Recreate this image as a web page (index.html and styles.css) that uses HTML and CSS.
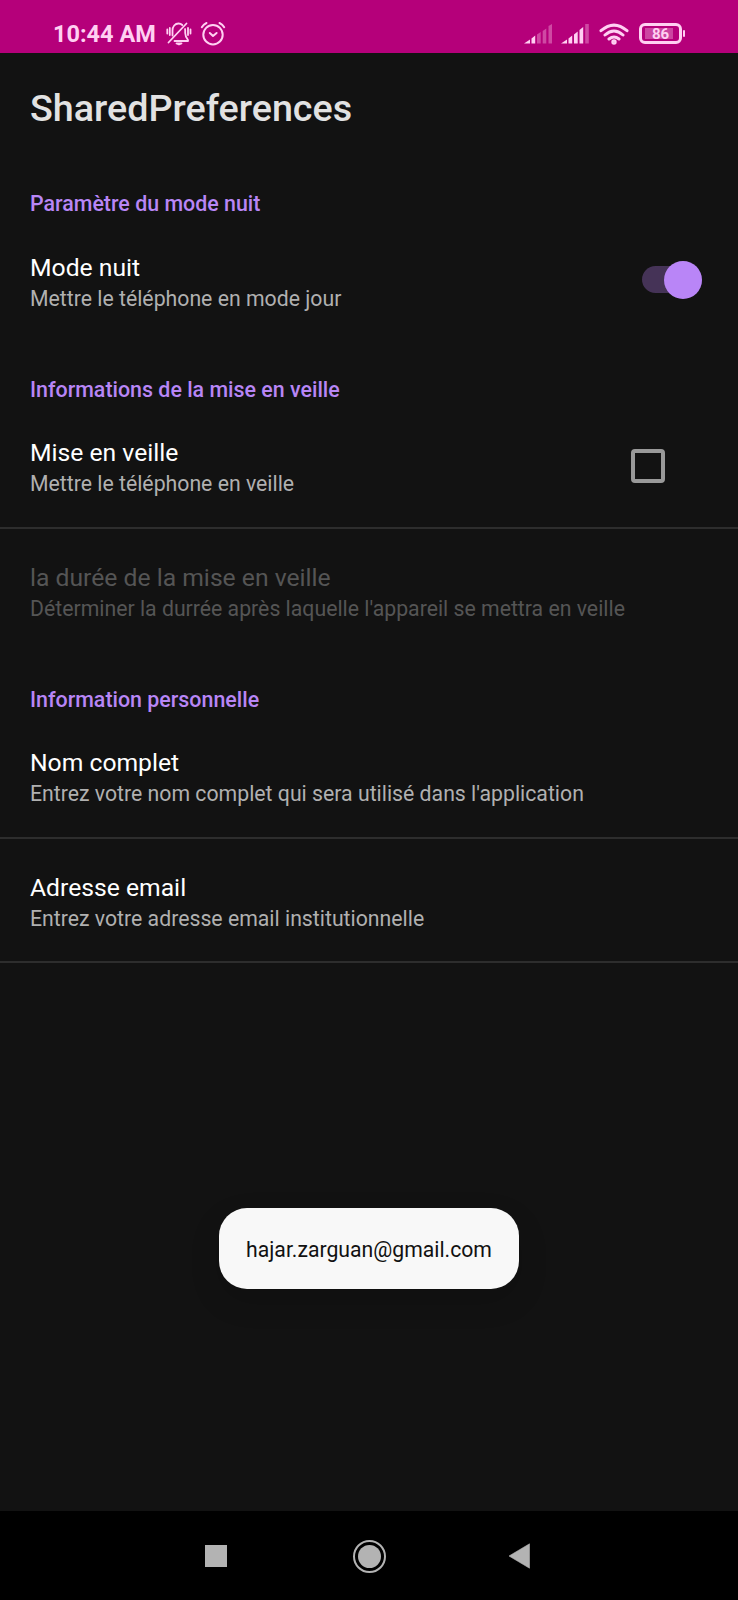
FILE: index.html
```html
<!DOCTYPE html>
<html lang="fr">
<head>
<meta charset="utf-8">
<title>SharedPreferences</title>
<link rel="stylesheet" href="styles.css">
</head>
<body>
<div class="screen">
  <header class="status">
    <span class="clock">10:44 AM</span>
    <svg class="st-bell" width="26" height="26" viewBox="0 0 26 26" fill="none" stroke="currentColor" stroke-width="1.8" stroke-linecap="round" stroke-linejoin="round">
      <path d="M6.500 14.500V9.500C6.500 5.500 9 2.500 12.500 2.500C14 2.500 15.300 3 16.300 4M19 8C19.300 9 19.200 10 19.200 12C19.200 14.500 20 16.500 22 19V20H8.500M10.500 22.500H15.500L13 23.500ZM2.500 21.500L20.500 2.500M1.300 8.500V12.500M3.800 7V14M22 7V14M24.500 8.500V12.500"/>
    </svg>
    <svg class="st-alarm" width="26" height="26" viewBox="0 0 26 26" fill="none" stroke="currentColor" stroke-width="2" stroke-linecap="round" stroke-linejoin="round">
      <circle cx="13" cy="13.700" r="9.700"/><path d="M9.800 12L13 15L16.600 12M1.800 6.200Q3.500 3.400 6.500 2M24.200 6.200Q22.500 3.400 19.500 2"/>
    </svg>
    <span class="spacer"></span>
    <svg class="st-sig1" width="30" height="22" viewBox="0 0 30 22" fill="currentColor">
      <path d="M0 20.500L6 16.500V20.500ZM7.500 15.500L11.200 12.500V20.500H7.500Z"/>
      <path opacity=".35" d="M13 11.500L16.700 9V20.500H13ZM18.700 8L22.300 5.500V20.500H18.700ZM24.500 3L28 1V20.500H24.500Z"/>
    </svg>
    <svg class="st-sig2" width="30" height="22" viewBox="0 0 30 22" fill="currentColor">
      <path d="M0 20.500L6 16.500V20.500ZM7.500 15.500L11.200 12.500V20.500H7.500ZM13 11.500L16.700 8.500V20.500H13ZM18.500 7L22.200 4V20.500H18.500Z"/>
      <path opacity=".35" d="M24.200 1H27.800V20.500H24.200Z"/>
    </svg>
    <svg class="st-wifi" width="30" height="22" viewBox="0 0 30 22" fill="none" stroke="currentColor" stroke-width="3" stroke-linecap="round">
      <path d="M2 7.700Q15 -3.500 28 7.700M6 12Q15 4 24 12M10 16Q15 12 20 16"/><circle cx="15" cy="19" r="1.200"/>
    </svg>
    <span class="battery"><span class="cell">86</span><span class="tip"></span></span>
  </header>

  <h1 class="title">SharedPreferences</h1>

  <main class="prefs">
    <h2 class="cat">Paramètre du mode nuit</h2>
    <div class="row">
      <div class="text"><div class="name">Mode nuit</div><div class="sum">Mettre le téléphone en mode jour</div></div>
      <span class="switch"><span class="thumb"></span></span>
    </div>
    <h2 class="cat">Informations de la mise en veille</h2>
    <div class="row line first">
      <div class="text"><div class="name">Mise en veille</div><div class="sum">Mettre le téléphone en veille</div></div>
      <span class="check"></span>
    </div>
    <div class="row off">
      <div class="text"><div class="name">la durée de la mise en veille</div><div class="sum">Déterminer la durrée après laquelle l'appareil se mettra en veille</div></div>
    </div>
    <h2 class="cat">Information personnelle</h2>
    <div class="row line first">
      <div class="text"><div class="name">Nom complet</div><div class="sum">Entrez votre nom complet qui sera utilisé dans l'application</div></div>
    </div>
    <div class="row line">
      <div class="text"><div class="name">Adresse email</div><div class="sum">Entrez votre adresse email institutionnelle</div></div>
    </div>
  </main>

  <div class="toast">hajar.zarguan@gmail.com</div>

  <nav class="nav">
    <span class="recent"></span>
    <span class="home"></span>
    <svg class="back" width="22" height="26" viewBox="0 0 22 26"><path d="M1 13L21.500 .8V25.200Z" fill="#b3b3b3" stroke="#b3b3b3" stroke-width=".6" stroke-linejoin="round"/></svg>
  </nav>
</div>
</body>
</html>
```

FILE: styles.css
```css
* { box-sizing: border-box; }
body { margin: 0; background: #121212; font-family: Roboto, sans-serif; }
.screen { position: relative; width: 738px; height: 1600px; display: flex; flex-direction: column; background: #121212; overflow: hidden; }

.status { height: 53px; flex: none; display: flex; align-items: flex-start; padding: 21px 53px 0 53px; background: #b5007a; color: #ffd0f2; }
.clock { width: 104px; font-size: 23.5px; line-height: 26px; font-weight: 700; white-space: nowrap; }
.st-bell { margin-left: 9px; }
.st-alarm { margin-left: 8px; }
.spacer { flex: 1; }
.st-sig1 { margin: 2px 7px 0 0; }
.st-sig2 { margin: 2px 8px 0 0; }
.st-wifi { margin: 2px 10px 0 0; }
.battery { display: flex; align-items: center; gap: 1px; margin-top: 2px; }
.cell { width: 43px; height: 21px; border: 3px solid #ffd0f2; border-radius: 6px; font-size: 15px; font-weight: 700; line-height: 16px; text-align: center; background: linear-gradient(#cc45a1, #cc45a1) 2.5px 2px / 28px 11px no-repeat; }
.tip { width: 2px; height: 7px; background: #ffd0f2; border-radius: 1px; }

.title { margin: 0; height: 104px; flex: none; padding: 32px 30px 0; color: #e2e2e2; font-size: 37.7px; font-weight: 500; line-height: 46px; }
.prefs { flex: none; }
.cat { margin: 0; height: 62px; padding: 32px 30px 0; color: #b886f6; font-size: 21.4px; font-weight: 500; line-height: 29px; }
.row { height: 124px; display: flex; justify-content: space-between; padding: 33px 30px 0; }
.first { padding-top: 32px; }
.line { border-bottom: 2px solid #2d2d2d; }
.text { white-space: nowrap; }
.name { margin-bottom: 1px; color: #fff; font-size: 24.7px; line-height: 32px; }
.sum { color: #b0b0b0; font-size: 21.26px; line-height: 28px; }
.off .name, .off .sum { color: #555; }
.switch { width: 60px; height: 27px; margin: 14px 6px 0 0; display: flex; justify-content: flex-end; align-items: center; background: #453357; border-radius: 14px; }
.thumb { flex: none; width: 38px; height: 38px; border-radius: 50%; background: #b985f7; }
.check { width: 34px; height: 34px; margin: 12px 43px 0 0; border: 4px solid #999; border-radius: 4px; }

.toast { position: absolute; left: 219px; top: 1208px; width: 300px; height: 81px; border-radius: 28px; background: #f8f8f8; color: #111; font-size: 21.2px; line-height: 84px; text-align: center; box-shadow: 0 12px 30px rgba(0,0,0,.15); }

.nav { height: 89px; margin-top: auto; flex: none; display: flex; align-items: center; padding: 1px 0 0 205px; background: #000; }
.recent { width: 22px; height: 22px; background: #b3b3b3; }
.home { width: 33px; height: 33px; margin: 0 122px 0 126px; border: 2.5px solid #b3b3b3; border-radius: 50%; display: grid; place-items: center; }
.home::before { content: ""; width: 23px; height: 23px; border-radius: 50%; background: #b3b3b3; }
```
